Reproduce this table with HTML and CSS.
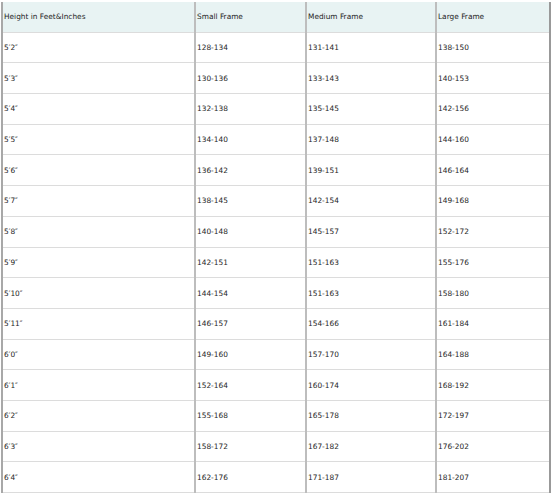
FILE: index.html
```html
<!DOCTYPE html>
<html>
<head>
<meta charset="utf-8">
<link rel="stylesheet" href="styles.css">
</head>
<body>
<div class="wrap">
<table class="chart">
<colgroup><col class="c1"><col class="c2"><col class="c3"><col class="c4"></colgroup>
<thead>
<tr><th>Height in Feet&amp;Inches</th><th>Small Frame</th><th>Medium Frame</th><th>Large Frame</th></tr>
</thead>
<tbody>
<tr><td>5′2″</td><td>128-134</td><td>131-141</td><td>138-150</td></tr>
<tr><td>5′3″</td><td>130-136</td><td>133-143</td><td>140-153</td></tr>
<tr><td>5′4″</td><td>132-138</td><td>135-145</td><td>142-156</td></tr>
<tr><td>5′5″</td><td>134-140</td><td>137-148</td><td>144-160</td></tr>
<tr><td>5′6″</td><td>136-142</td><td>139-151</td><td>146-164</td></tr>
<tr><td>5′7″</td><td>138-145</td><td>142-154</td><td>149-168</td></tr>
<tr><td>5′8″</td><td>140-148</td><td>145-157</td><td>152-172</td></tr>
<tr><td>5′9″</td><td>142-151</td><td>151-163</td><td>155-176</td></tr>
<tr><td>5′10″</td><td>144-154</td><td>151-163</td><td>158-180</td></tr>
<tr><td>5′11″</td><td>146-157</td><td>154-166</td><td>161-184</td></tr>
<tr><td>6′0″</td><td>149-160</td><td>157-170</td><td>164-188</td></tr>
<tr><td>6′1″</td><td>152-164</td><td>160-174</td><td>168-192</td></tr>
<tr><td>6′2″</td><td>155-168</td><td>165-178</td><td>172-197</td></tr>
<tr><td>6′3″</td><td>158-172</td><td>167-182</td><td>176-202</td></tr>
<tr><td>6′4″</td><td>162-176</td><td>171-187</td><td>181-207</td></tr>
</tbody>
</table>
</div>
</body>
</html>
```
FILE: styles.css
```css
html, body {
  margin: 0;
  padding: 0;
  background: #fff;
}
.wrap {
  padding: 2px 0 0 1px;
}
.chart {
  border-collapse: collapse;
  table-layout: fixed;
  width: 548px;
  font-family: "DejaVu Sans", Verdana, sans-serif;
  font-size: 7.4px;
  color: #1e1e1e;
}
.c1 { width: 193px; }
.c2 { width: 111px; }
.c3 { width: 130px; }
.c4 { width: 114px; }
.chart th, .chart td {
  height: 29.7px;
  padding: 0 0 0 1px;
  text-align: left;
  font-weight: normal;
  vertical-align: middle;
  border-left: 2px solid #bdbdbd;
  border-right: 2px solid #bdbdbd;
  border-bottom: 1px solid #dcdcdc;
  white-space: nowrap;
}
.chart th {
  background: #e8f3f3;
}
.chart th:first-child, .chart td:first-child {
  border-left-color: #a8a8a8;
}
.chart th:last-child, .chart td:last-child {
  border-right-color: #999;
}
```
